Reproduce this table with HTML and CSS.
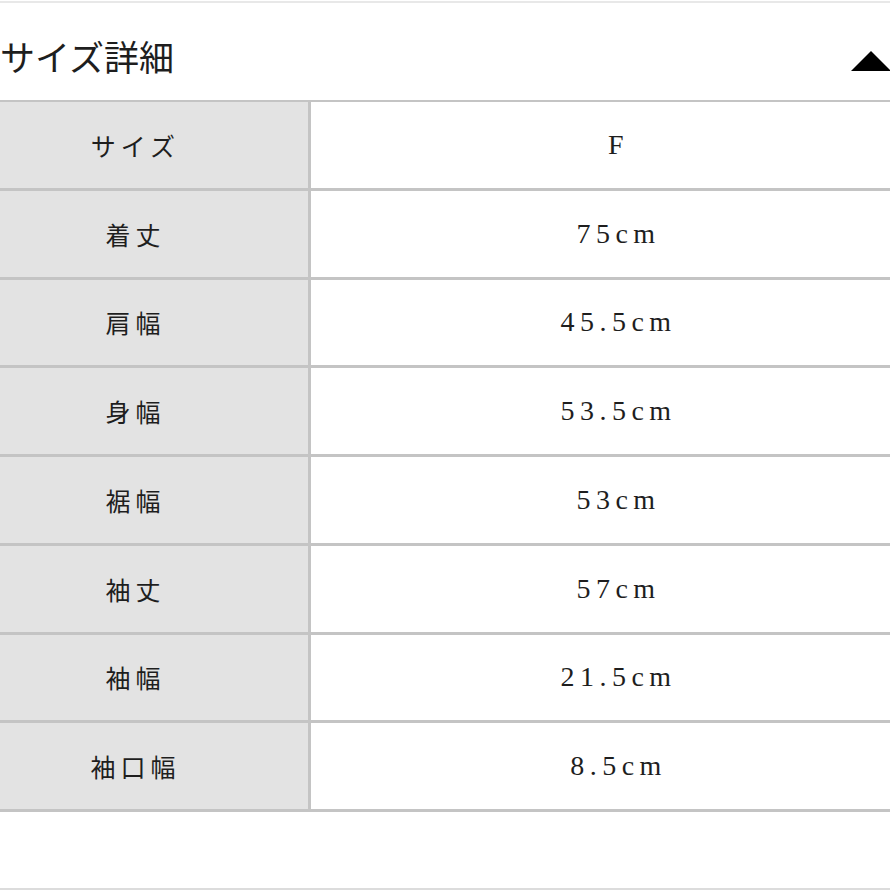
FILE: index.html
```html
<!DOCTYPE html>
<html lang="ja">
<head>
<meta charset="utf-8">
<link rel="stylesheet" href="styles.css">
</head>
<body>
<div class="page">
  <div class="topline"></div>
  <div class="header">
    <h2 class="title">サイズ詳細</h2>
    <span class="toggle"></span>
  </div>
  <div class="table">
    <div class="row"><div class="key">サイズ</div><div class="val">F</div></div>
    <div class="row"><div class="key">着丈</div><div class="val">75cm</div></div>
    <div class="row"><div class="key">肩幅</div><div class="val">45.5cm</div></div>
    <div class="row"><div class="key">身幅</div><div class="val">53.5cm</div></div>
    <div class="row"><div class="key">裾幅</div><div class="val">53cm</div></div>
    <div class="row"><div class="key">袖丈</div><div class="val">57cm</div></div>
    <div class="row"><div class="key">袖幅</div><div class="val">21.5cm</div></div>
    <div class="row"><div class="key">袖口幅</div><div class="val">8.5cm</div></div>
  </div>
  <div class="spacer"></div>
  <div class="bottomline"></div>
</div>
</body>
</html>
```
FILE: styles.css
```css
html, body {
  margin: 0;
  padding: 0;
  background: #ffffff;
}
.page {
  width: 890px;
  height: 890px;
  display: flex;
  flex-direction: column;
  font-family: "Liberation Serif", "Noto Sans CJK JP", serif;
  color: #1e1e1e;
  overflow: hidden;
}
.topline {
  height: 2px;
  margin-top: 1px;
  background: #e8e8e8;
}
.header {
  height: 97px;
  display: flex;
  align-items: center;
  justify-content: space-between;
}
.title {
  margin: 0;
  font-size: 35px;
  font-weight: 400;
  line-height: 1;
  padding-top: 15px;
}
.toggle {
  width: 0;
  height: 0;
  border-left: 20px solid transparent;
  border-right: 20px solid transparent;
  border-bottom: 20px solid #000;
  margin-top: 18px;
  margin-right: -1px;
}
.table {
  border-top: 2px solid #c4c4c4;
  display: flex;
  flex-direction: column;
}
.row {
  display: flex;
  height: 85.75px;
  border-bottom: 3px solid #c4c4c4;
}
.key {
  width: 311px;
  box-sizing: border-box;
  padding-right: 37px;
  background: #e3e3e3;
  border-right: 3px solid #c4c4c4;
  display: flex;
  align-items: center;
  justify-content: center;
  font-size: 25px;
  letter-spacing: 5px;
}
.val {
  flex: 1;
  box-sizing: border-box;
  padding-left: 36px;
  display: flex;
  align-items: center;
  justify-content: center;
  font-size: 28px;
  letter-spacing: 5.5px;
}
.spacer {
  flex: 1;
}
.bottomline {
  height: 2px;
  background: #dcdcdc;
}
```
